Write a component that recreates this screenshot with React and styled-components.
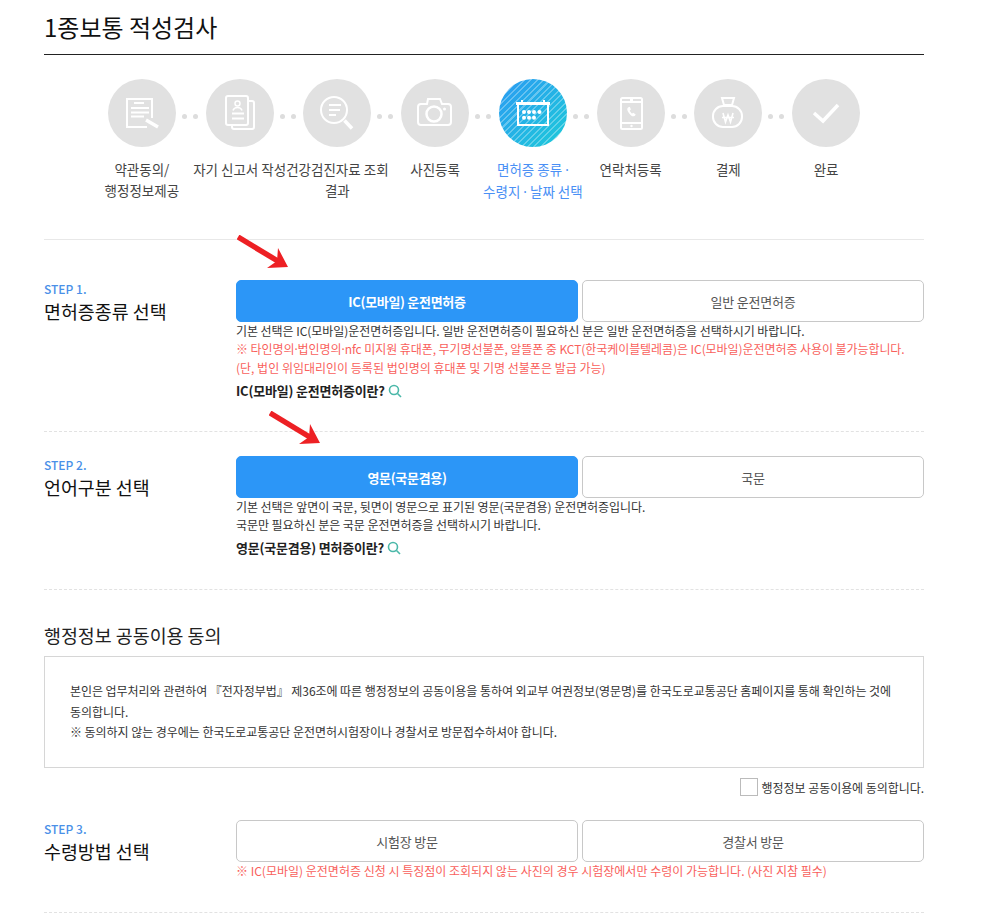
import React from 'react'
import styled, { createGlobalStyle } from 'styled-components'

const GlobalStyle = createGlobalStyle`
  html, body {
    margin: 0;
    padding: 0;
    background: #fff;
    font-family: 'Noto Sans CJK KR', 'Noto Sans', sans-serif;
    color: #333;
  }
`

const Icon = ({ children }) => (
  <svg width='40' height='40' viewBox='0 0 40 40' fill='none' stroke='#fff' strokeWidth='2'>
    {children}
  </svg>
)

const steps = [
  {
    label: '약관동의/\n행정정보제공',
    icon: (
      <Icon>
        <path d='M30 25V6H5v28h20' />
        <path d='M12 10h10M9 15h18M9 19.500h18M9 23.500h13' />
        <path d='M24 27l12 7' strokeWidth='3.500' />
      </Icon>
    ),
  },
  {
    label: '자기 신고서 작성',
    icon: (
      <Icon>
        <rect x='6' y='3' width='22' height='29' rx='2' />
        <path d='M28 8h4a2 2 0 0 1 2 2v24a2 2 0 0 1-2 2H14a2 2 0 0 1-2-2v-2' />
        <circle cx='17.500' cy='10.500' r='2.500' strokeWidth='1.500' />
        <path d='M13 17.500c.6-2 2.200-3 4.500-3s3.900 1 4.500 3' strokeWidth='1.500' />
        <path d='M12 20.500h12M12 25.500h12' />
      </Icon>
    ),
  },
  {
    label: '건강검진자료 조회\n결과',
    icon: (
      <Icon>
        <circle cx='17' cy='17' r='13' />
        <path d='M12 12h12M12 17h11M12 22h7' />
        <path d='M27.500 27.500l7.500 8' strokeWidth='3.500' />
      </Icon>
    ),
  },
  {
    label: '사진등록',
    icon: (
      <Icon>
        <path d='M6 11h6l1-5h12l2 5h6a3 3 0 0 1 3 3v15a3 3 0 0 1-3 3H6a3 3 0 0 1-3-3V14a3 3 0 0 1 3-3z' />
        <circle cx='19' cy='21' r='7.500' strokeWidth='2.500' />
        <circle cx='29.500' cy='16' r='1.500' fill='#fff' stroke='none' />
      </Icon>
    ),
  },
  {
    label: '면허증 종류 ·\n수령지 · 날짜 선택',
    active: true,
    icon: (
      <Icon>
        <path d='M5 11v21h30V11' />
        <path d='M3 10.500h34' strokeWidth='3' />
        <path d='M9 7v3M31 7v3' />
        {[11, 16, 21, 26.5].map((x) => (
          <circle key={x} cx={x} cy='19' r='2' fill='#fff' stroke='none' />
        ))}
        {[11, 16, 21].map((x) => (
          <circle key={x} cx={x} cy='24.700' r='2' fill='#fff' stroke='none' />
        ))}
      </Icon>
    ),
  },
  {
    label: '연락처등록',
    icon: (
      <Icon>
        <rect x='10' y='5' width='21' height='31' rx='1.500' />
        <path d='M10 9h21M10 30h21M19 7h3' />
        <circle cx='20.500' cy='33' r='1.200' fill='#fff' stroke='none' />
        <path d='M17 14.500c-1.200 1-1 2.800.7 5.200s3.700 4 5.300 3.600c.8-.2 1.500-1 1.700-1.700l-2.400-1.800-1.100.8c-.9-.5-2.100-2.100-2.400-3.200l1.100-.8-1.100-2.900z' fill='#fff' stroke='none' />
      </Icon>
    ),
  },
  {
    label: '결제',
    icon: (
      <Icon>
        <path d='M14 5h12l-2 7h-8z' />
        <rect x='5' y='13' width='29' height='21' rx='10' />
        <path d='M15 20l2.500 9 2.500-7 2.500 7 2.500-9M14 24.500h12' strokeWidth='1.600' />
      </Icon>
    ),
  },
  {
    label: '완료',
    icon: (
      <Icon>
        <path d='M8 20l9 8 15-16' strokeWidth='3.500' />
      </Icon>
    ),
  },
]

// the middle dot is narrow in the original, the CJK font draws it full width
const withDots = (text) =>
  text.split('·').map((part, index) => (
    <React.Fragment key={index}>
      {index > 0 && <Dot>·</Dot>}
      {part}
    </React.Fragment>
  ))

const SearchIcon = () => (
  <svg width='14' height='14' viewBox='0 0 14 14' fill='none' stroke='#4bb8a9' strokeWidth='1.600'>
    <circle cx='6' cy='6' r='4.500' />
    <path d='M9.500 9.500L13 13' />
  </svg>
)

const Arrow = ({ top, left }) => (
  <ArrowMark $top={top} $left={left} width='54' height='36' viewBox='0 0 54 36'>
    <path d='M1 2L44 28' stroke='#ed2024' strokeWidth='5.500' />
    <path d='M41 13L51 32 30 33 40 26z' fill='#ed2024' />
  </ArrowMark>
)

const App = () => {
  return (
    <Page>
      <GlobalStyle />
      <Title>1종보통 적성검사</Title>
      <Stepper>
        {steps.map((step, index) => (
          <Step key={step.label} $last={index === steps.length - 1}>
            <Circle $active={step.active}>{step.icon}</Circle>
            <StepLabel $active={step.active}>{withDots(step.label)}</StepLabel>
          </Step>
        ))}
      </Stepper>

      <Section $first>
        <div>
          <StepNo>STEP 1.</StepNo>
          <StepName>면허증종류 선택</StepName>
        </div>
        <div>
          <Choices>
            <Choice $on>IC(모바일) 운전면허증</Choice>
            <Choice>일반 운전면허증</Choice>
          </Choices>
          <Note>기본 선택은 IC(모바일)운전면허증입니다. 일반 운전면허증이 필요하신 분은 일반 운전면허증을 선택하시기 바랍니다.</Note>
          <TightWarn>{withDots('※ 타인명의·법인명의·nfc 미지원 휴대폰, 무기명선불폰, 알뜰폰 중 KCT(한국케이블텔레콤)은 IC(모바일)운전면허증 사용이 불가능합니다.')}</TightWarn>
          <Warn>(단, 법인 위임대리인이 등록된 법인명의 휴대폰 및 기명 선불폰은 발급 가능)</Warn>
          <Help>IC(모바일) 운전면허증이란? <SearchIcon /></Help>
        </div>
      </Section>

      <Section>
        <div>
          <StepNo>STEP 2.</StepNo>
          <StepName>언어구분 선택</StepName>
        </div>
        <div>
          <Choices>
            <Choice $on>영문(국문겸용)</Choice>
            <Choice>국문</Choice>
          </Choices>
          <Note>기본 선택은 앞면이 국문, 뒷면이 영문으로 표기된 영문(국문겸용) 운전면허증입니다.</Note>
          <Note>국문만 필요하신 분은 국문 운전면허증을 선택하시기 바랍니다.</Note>
          <Help>영문(국문겸용) 면허증이란? <SearchIcon /></Help>
        </div>
      </Section>

      <Agreement>
        <AgreementTitle>행정정보 공동이용 동의</AgreementTitle>
        <AgreementBox>
          본인은 업무처리와 관련하여 『전자정부법』 제36조에 따른 행정정보의 공동이용을 통하여 외교부 여권정보(영문명)를 한국도로교통공단 홈페이지를 통해 확인하는 것에 동의합니다.
          <br />
          ※ 동의하지 않는 경우에는 한국도로교통공단 운전면허시험장이나 경찰서로 방문접수하셔야 합니다.
        </AgreementBox>
        <AgreeRow>
          <CheckBox />
          행정정보 공동이용에 동의합니다.
        </AgreeRow>
      </Agreement>

      <LastSection>
        <div>
          <StepNo>STEP 3.</StepNo>
          <StepName>수령방법 선택</StepName>
        </div>
        <div>
          <Choices>
            <Choice>시험장 방문</Choice>
            <Choice>경찰서 방문</Choice>
          </Choices>
          <Warn>※ IC(모바일) 운전면허증 신청 시 특징점이 조회되지 않는 사진의 경우 시험장에서만 수령이 가능합니다. (사진 지참 필수)</Warn>
        </div>
      </LastSection>

      <Arrow top={235} left={237} />
      <Arrow top={411} left={269} />
    </Page>
  )
}

const Page = styled.div`
  position: relative;
  box-sizing: border-box;
  width: 880px;
  height: 914px;
  margin-left: 44px;
  overflow: hidden;
`

const Title = styled.h1`
  margin: 0;
  padding-top: 9px;
  box-sizing: border-box;
  border-bottom: 1px solid #222;
  height: 55px;
  font-size: 24px;
  line-height: 36px;
  font-weight: 400;
  color: #111;
`

const Dot = styled.span`
  font-family: 'Noto Sans', sans-serif;
`

const Stepper = styled.ul`
  display: flex;
  justify-content: center;
  margin: 24px 0 0;
  padding: 0;
  list-style: none;
  height: 160px;
`

const Step = styled.li`
  position: relative;
  width: 97.750px;
  display: flex;
  flex-direction: column;
  align-items: center;
  ${({ $last }) =>
    !$last &&
    `
    &::before, &::after {
      content: '';
      position: absolute;
      top: 35px;
      width: 5px;
      height: 5px;
      border-radius: 50%;
      background: #ddd;
    }
    &::before { right: 4px; }
    &::after { right: -7px; }
  `}
`

const Circle = styled.div`
  width: 68px;
  height: 68px;
  border-radius: 50%;
  display: flex;
  align-items: center;
  justify-content: center;
  background: ${({ $active }) =>
    $active
      ? `repeating-linear-gradient(135deg, rgba(255,255,255,0.3) 0 1.500px, transparent 1.500px 4.500px), linear-gradient(135deg, #2b9af3, #1ccbd8)`
      : '#e1e1e1'};
`

const StepLabel = styled.p`
  margin: 12px 0 0;
  font-size: 13.500px;
  line-height: 21px;
  text-align: center;
  white-space: pre;
  color: ${({ $active }) => ($active ? '#4a90f5' : '#444')};
`

const Section = styled.section`
  display: grid;
  grid-template-columns: 192px 688px;
  box-sizing: border-box;
  padding: ${({ $first }) => ($first ? '40px 0 30px' : '24px 0 31px')};
  border-top: 1px ${({ $first }) => ($first ? 'solid #e8e8e8' : 'dashed #e2e2e2')};
`

const LastSection = styled(Section)`
  border-top: 0;
  padding: 0 0 32px;
  border-bottom: 1px dashed #e2e2e2;
`

const StepNo = styled.div`
  font-size: 12px;
  line-height: 18px;
  font-weight: 500;
  color: #4a90e8;
`

const StepName = styled.div`
  font-size: 18.400px;
  line-height: 26px;
  color: #111;
`

const Choices = styled.div`
  display: grid;
  grid-template-columns: 342px 342px;
  gap: 4px;
`

const Choice = styled.div`
  box-sizing: border-box;
  height: 42px;
  display: flex;
  align-items: center;
  justify-content: center;
  border-radius: 5px;
  font-size: 13px;
  letter-spacing: ${({ $on }) => ($on ? '-0.3px' : '-0.2px')};
  font-weight: ${({ $on }) => ($on ? 700 : 400)};
  background: ${({ $on }) => ($on ? '#2c96f7' : '#fff')};
  color: ${({ $on }) => ($on ? '#fff' : '#555')};
  border: 1px solid ${({ $on }) => ($on ? '#2c96f7' : '#c8c8c8')};
`

const Note = styled.p`
  margin: 0;
  font-size: 12px;
  letter-spacing: -0.05px;
  line-height: 18px;
  color: #333;
  white-space: nowrap;
`

const Warn = styled(Note)`
  letter-spacing: 0;
  color: #f95f5c;
`

const TightWarn = styled(Warn)`
  letter-spacing: -0.07px;
`

const Help = styled.p`
  margin: 4px 0 0;
  display: flex;
  align-items: center;
  gap: 3px;
  font-size: 13px;
  font-weight: 700;
  letter-spacing: -0.2px;
  line-height: 20px;
  color: #222;
`

const Agreement = styled.section`
  border-top: 1px dashed #e2e2e2;
  padding-top: 32px;
`

const AgreementTitle = styled.h2`
  margin: 0 0 8px;
  font-size: 18.400px;
  line-height: 26px;
  font-weight: 400;
  color: #222;
`

const AgreementBox = styled.div`
  box-sizing: border-box;
  height: 112px;
  padding: 24px 25px;
  border: 1px solid #d6d6d6;
  font-size: 12px;
  letter-spacing: -0.05px;
  line-height: 20.500px;
  color: #333;
`

const AgreeRow = styled.label`
  display: flex;
  justify-content: flex-end;
  align-items: center;
  gap: 4px;
  height: 38px;
  margin-bottom: 14px;
  font-size: 12px;
  letter-spacing: -0.05px;
  color: #333;
`

const CheckBox = styled.span`
  box-sizing: border-box;
  width: 18px;
  height: 18px;
  border: 1px solid #bbb;
`

const ArrowMark = styled.svg`
  position: absolute;
  top: ${({ $top }) => $top}px;
  left: ${({ $left }) => $left - 44}px;
`

export default App
